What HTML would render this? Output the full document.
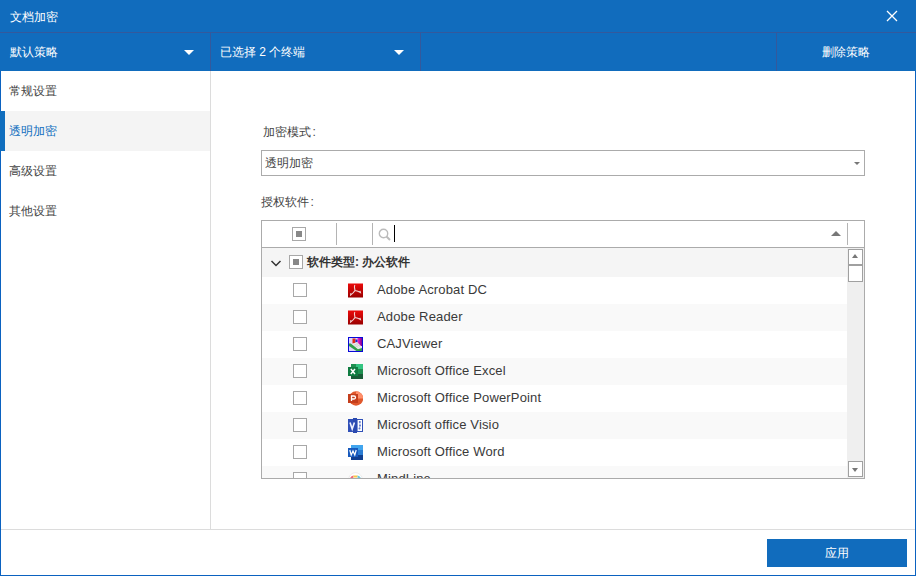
<!DOCTYPE html>
<html><head><meta charset="utf-8">
<style>
*{box-sizing:border-box;margin:0;padding:0}
html,body{width:916px;height:576px;overflow:hidden;background:#fff}
body{font-family:"Liberation Sans",sans-serif;position:relative;color:#444}
.abs{position:absolute}
.blue{background:#116cbd}
.wt{color:#fff;font-size:12px;line-height:14px;white-space:nowrap}
.tri{width:0;height:0;border-left:5px solid transparent;border-right:5px solid transparent;border-top:5px solid #fff}
.nav{position:absolute;left:1px;width:209px;height:40px;font-size:12px;line-height:40px;padding-left:8px;color:#444}
.row{position:absolute;left:262px;width:585px;height:27px}
.cb{position:absolute;width:14px;height:14px;border:1px solid #a8a8a8;background:#fff}
.ic{position:absolute;left:86px;top:6px;width:15px;height:15px}
.rt{position:absolute;left:115px;top:-1px;line-height:27px;font-size:13px;letter-spacing:0.15px;color:#3a3a3a;white-space:nowrap}
</style></head><body>
<!-- window border -->
<div class="abs" style="left:0;top:0;width:916px;height:576px;border:1px solid #0b62c0;border-top:none"></div>
<!-- title bar -->
<div class="abs blue" style="left:0;top:0;width:916px;height:32px"></div>
<div class="abs wt" style="left:10px;top:10px">文档加密</div>
<svg class="abs" style="left:886px;top:10px" width="12" height="12" viewBox="0 0 12 12"><path d="M1 1L11 11M11 1L1 11" stroke="#fff" stroke-width="1.3"/></svg>
<div class="abs" style="left:0;top:32px;width:916px;height:1px;background:#34599c"></div>
<!-- toolbar -->
<div class="abs blue" style="left:0;top:33px;width:916px;height:38px"></div>
<div class="abs wt" style="left:10px;top:45px">默认策略</div>
<div class="abs tri" style="left:184px;top:50px"></div>
<div class="abs" style="left:210px;top:33px;width:1px;height:38px;background:#34599c"></div>
<div class="abs wt" style="left:220px;top:45px">已选择 2 个终端</div>
<div class="abs tri" style="left:394px;top:50px"></div>
<div class="abs" style="left:420px;top:33px;width:1px;height:38px;background:#34599c"></div>
<div class="abs" style="left:776px;top:33px;width:1px;height:38px;background:#34599c"></div>
<div class="abs wt" style="left:822px;top:45px">删除策略</div>
<!-- left nav -->
<div class="abs" style="left:210px;top:71px;width:1px;height:458px;background:#dcdcdc"></div>
<div class="nav" style="top:71px">常规设置</div>
<div class="nav" style="top:111px;background:#f4f4f4;color:#106ebe"><div class="abs" style="left:-1px;top:0;width:5px;height:40px;background:#106ebe"></div>透明加密</div>
<div class="nav" style="top:151px">高级设置</div>
<div class="nav" style="top:191px">其他设置</div>
<!-- footer -->
<div class="abs" style="left:1px;top:529px;width:914px;height:1px;background:#dcdcdc"></div>
<div class="abs blue wt" style="left:767px;top:539px;width:140px;height:28px;line-height:29px;text-align:center;font-size:12px">应用</div>

<!-- form -->
<div class="abs" style="left:263px;top:125px;font-size:12px;line-height:14px">加密模式<span style="margin-left:1.5px">:</span></div>
<div class="abs" style="left:261px;top:150px;width:604px;height:26px;border:1px solid #ababab"></div>
<div class="abs" style="left:265px;top:156px;font-size:12px;line-height:14px">透明加密</div>
<div class="abs" style="left:854px;top:162px;width:0;height:0;border-left:3px solid transparent;border-right:3px solid transparent;border-top:3px solid #777"></div>
<div class="abs" style="left:261px;top:195px;font-size:12px;line-height:14px">授权软件<span style="margin-left:1.5px">:</span></div>

<!-- table -->
<div class="abs" style="left:261px;top:220px;width:604px;height:259px;border:1px solid #ababab"></div>
<div class="abs" style="left:262px;top:247px;width:602px;height:1px;background:#ababab"></div>
<div class="cb" style="left:292px;top:227px"></div>
<div class="abs" style="left:296px;top:231px;width:6px;height:6px;background:#888"></div>
<div class="abs" style="left:336px;top:223px;width:1px;height:22px;background:#b4b4b4"></div>
<div class="abs" style="left:372px;top:223px;width:1px;height:22px;background:#b4b4b4"></div>
<svg class="abs" style="left:378px;top:228px" width="14" height="14" viewBox="0 0 14 14"><circle cx="5.5" cy="5.5" r="4.2" fill="none" stroke="#bbb" stroke-width="1.4"/><path d="M8.5 8.5L12 12" stroke="#bbb" stroke-width="2"/></svg>
<div class="abs" style="left:394px;top:225px;width:1px;height:17px;background:#000"></div>
<div class="abs" style="left:831px;top:231px;width:0;height:0;border-left:5px solid transparent;border-right:5px solid transparent;border-bottom:5px solid #777"></div>
<div class="abs" style="left:847px;top:223px;width:1px;height:22px;background:#b4b4b4"></div>

<!-- group row -->
<div class="abs" style="left:262px;top:248px;width:585px;height:29px;background:#f5f5f5"></div>
<svg class="abs" style="left:270px;top:259px" width="12" height="9" viewBox="0 0 12 9"><path d="M1.5 2L6 6.5L10.5 2" fill="none" stroke="#333" stroke-width="1.5"/></svg>
<div class="cb" style="left:289px;top:255px"></div>
<div class="abs" style="left:293px;top:259px;width:6px;height:6px;background:#888"></div>
<div class="abs" style="left:307px;top:255px;font-size:12px;line-height:14px;font-weight:bold;color:#333">软件类型: 办公软件</div>

<div class="abs" style="left:262px;top:277px;width:585px;height:201px;overflow:hidden">
<div class="row" style="left:0;top:0px;background:#fff"><div class="cb" style="left:31px;top:6px"></div><svg class="ic" viewBox="0 0 15 14" width="15" height="14"><defs><linearGradient id="gr" x1="0" y1="0" x2="0" y2="1"><stop offset="0" stop-color="#ec0a0a"/><stop offset="1" stop-color="#990000"/></linearGradient></defs><rect x="0" y="0" width="15" height="14" fill="url(#gr)"/><path d="M6.8 1.6Q5.8 3.5 7 7Q5 10 2.6 11.6L2.9 9.6M7 7Q10 7.6 12.4 9L12 7.4" fill="none" stroke="#f3d6d6" stroke-width="1.1"/></svg><div class="rt">Adobe Acrobat DC</div></div>
<div class="row" style="left:0;top:27px;background:#f9f9f9"><div class="cb" style="left:31px;top:6px"></div><svg class="ic" viewBox="0 0 15 14" width="15" height="14"><defs><linearGradient id="gr2" x1="0" y1="0" x2="0" y2="1"><stop offset="0" stop-color="#ec0a0a"/><stop offset="1" stop-color="#990000"/></linearGradient></defs><rect x="0" y="0" width="15" height="14" fill="url(#gr2)"/><path d="M6.8 1.6Q5.8 3.5 7 7Q5 10 2.6 11.6L2.9 9.6M7 7Q10 7.6 12.4 9L12 7.4" fill="none" stroke="#f3d6d6" stroke-width="1.1"/></svg><div class="rt">Adobe Reader</div></div>
<div class="row" style="left:0;top:54px;background:#fff"><div class="cb" style="left:31px;top:6px"></div><svg class="ic" viewBox="0 0 15 15" width="15" height="15"><defs><linearGradient id="cg" x1="0" y1="0" x2="1" y2="0"><stop offset="0" stop-color="#ff20d0"/><stop offset="1" stop-color="#7a0090"/></linearGradient></defs><rect x="0.5" y="0.5" width="14" height="14" fill="#dcd8fa" stroke="#0808d8" stroke-width="1"/><rect x="9.5" y="1" width="4.5" height="8" fill="url(#cg)"/><rect x="4.5" y="1.5" width="3" height="5" fill="#e02818"/><rect x="7.5" y="2.5" width="2" height="3" fill="#1828c8"/><path d="M4 7L9 5L14 10L9 13Z" fill="#eeeeee"/><path d="M6 6.5L11 11.5M8 5.8L12.5 10.2M5.5 8.5L10 6.5M7 10L12 8" stroke="#c8c8c8" stroke-width="0.6"/><path d="M1 6.5L2.8 6.5L10 12.3L14 11L14 14L8.5 14L1 9Z" fill="#30a048"/></svg><div class="rt">CAJViewer</div></div>
<div class="row" style="left:0;top:81px;background:#f9f9f9"><div class="cb" style="left:31px;top:6px"></div><svg class="ic" viewBox="0 0 15 15" width="15" height="15"><rect x="3" y="0" width="12" height="15" fill="#1e8f50"/><rect x="8" y="0" width="7" height="5" fill="#33c481"/><rect x="3" y="10" width="12" height="5" fill="#185c37"/><rect x="0" y="3" width="10" height="9" fill="#107c41"/><path d="M2.8 5L7 10M7 5L2.8 10" stroke="#fff" stroke-width="1.5"/></svg><div class="rt">Microsoft Office Excel</div></div>
<div class="row" style="left:0;top:108px;background:#fff"><div class="cb" style="left:31px;top:6px"></div><svg class="ic" viewBox="0 0 15 15" width="15" height="15"><circle cx="8" cy="7.5" r="7.2" fill="#e0582c"/><path d="M8 0.3A7.2 7.2 0 0 1 15.2 7.5H8Z" fill="#ff8f6b"/><rect x="0" y="3" width="10" height="9" fill="#c43e1c"/><path d="M3.5 10V5H6C7.2 5 7.5 5.8 7.5 6.5C7.5 7.2 7 8 6 8H3.5" fill="none" stroke="#fff" stroke-width="1.3"/></svg><div class="rt">Microsoft Office PowerPoint</div></div>
<div class="row" style="left:0;top:135px;background:#f9f9f9"><div class="cb" style="left:31px;top:6px"></div><svg class="ic" viewBox="0 0 15 15" width="15" height="15"><rect x="0" y="1" width="15" height="13" fill="#3050b8"/><rect x="5" y="0" width="4" height="15" fill="#2b4ab0"/><rect x="9.6" y="2" width="4.4" height="11" fill="#fff"/><circle cx="11.8" cy="4" r="1" fill="#5570c8"/><circle cx="12" cy="7.5" r="1" fill="#5570c8"/><circle cx="11.5" cy="10.5" r="1" fill="#5570c8"/><path d="M11.8 4L12 7.5L11.5 10.5" stroke="#8090d0" stroke-width="0.6" fill="none"/><path d="M2 4.5L4.2 11L6.4 4.5" fill="none" stroke="#f0f2ff" stroke-width="1.6"/></svg><div class="rt">Microsoft office Visio</div></div>
<div class="row" style="left:0;top:162px;background:#fff"><div class="cb" style="left:31px;top:6px"></div><svg class="ic" viewBox="0 0 15 15" width="15" height="15"><rect x="3" y="0" width="12" height="15" fill="#185abd"/><rect x="3" y="0" width="12" height="5" fill="#41a5ee"/><rect x="3" y="5" width="12" height="5" fill="#2b7cd3"/><rect x="3" y="10" width="12" height="5" fill="#103f91"/><rect x="0" y="3" width="10" height="9" fill="#185abd"/><path d="M1.8 5L3.2 10L5 6L6.8 10L8.2 5" fill="none" stroke="#fff" stroke-width="1.2"/></svg><div class="rt">Microsoft Office Word</div></div>
<div class="row" style="left:0;top:189px;background:#f9f9f9"><div class="cb" style="left:31px;top:6px"></div><svg class="ic" viewBox="0 0 15 15" width="15" height="15"><circle cx="7.5" cy="7.5" r="6.8" fill="#fff" stroke="#e6e6e6" stroke-width="0.8"/><path d="M3 6.5Q4 4.8 5.5 4.6" stroke="#f06878" stroke-width="2" fill="none"/><path d="M5.5 4.6Q7.5 4.2 9.5 4.6" stroke="#f8c848" stroke-width="2" fill="none"/><path d="M9.5 4.6Q11 4.8 12 6.5" stroke="#68c8e0" stroke-width="2" fill="none"/></svg><div class="rt">MindLine</div></div>
</div>

<!-- scrollbar -->
<div class="abs" style="left:847px;top:248px;width:17px;height:230px;background:#efefef"></div>
<div class="abs" style="left:848px;top:249px;width:15px;height:16px;border:1px solid #a0a0a0;background:#fff"></div>
<div class="abs" style="left:852px;top:254px;width:0;height:0;border-left:3.5px solid transparent;border-right:3.5px solid transparent;border-bottom:4px solid #777"></div>
<div class="abs" style="left:848px;top:265px;width:15px;height:17px;border:1px solid #a0a0a0;background:#fff"></div>
<div class="abs" style="left:848px;top:461px;width:15px;height:16px;border:1px solid #a0a0a0;background:#fff"></div>
<div class="abs" style="left:852px;top:468px;width:0;height:0;border-left:3.5px solid transparent;border-right:3.5px solid transparent;border-top:4px solid #777"></div>
</body></html>
